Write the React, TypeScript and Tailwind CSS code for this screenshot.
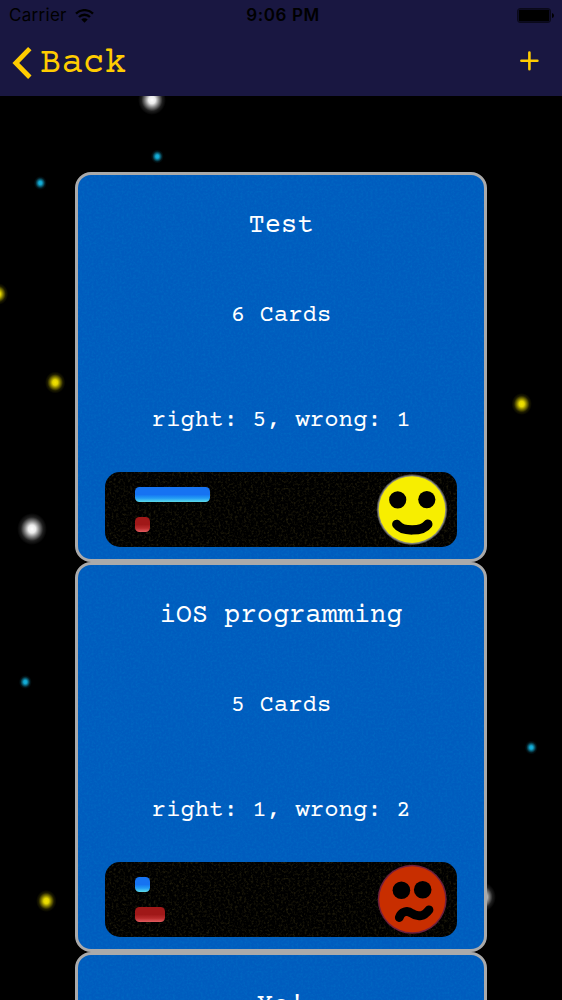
type Deck = { title: string; cards?: number; right?: number; wrong?: number; happy?: boolean };

const decks: Deck[] = [
  { title: "Test", cards: 6, right: 5, wrong: 1, happy: true },
  { title: "iOS programming", cards: 5, right: 1, wrong: 2, happy: false },
  { title: "Yo!" },
];

const stars = [
  { x: 152, y: 100, r: 15, color: "#ffffff" },
  { x: 157.3, y: 156.5, r: 7, color: "#14b4e0" },
  { x: 40.3, y: 183, r: 7, color: "#14b4e0" },
  { x: -2, y: 294, r: 11, color: "#f5e600" },
  { x: 55.2, y: 382.5, r: 11, color: "#f5e600" },
  { x: 521.7, y: 404, r: 11, color: "#f5e600" },
  { x: 32, y: 529, r: 16, color: "#ffffff" },
  { x: 25.3, y: 682, r: 7, color: "#14b4e0" },
  { x: 531.3, y: 747.5, r: 7, color: "#14b4e0" },
  { x: 46.3, y: 901, r: 11, color: "#f5e600" },
  { x: 482, y: 897, r: 15, color: "#ffffff" },
];

function StarField() {
  return (
    <svg className="absolute inset-0" width="562" height="1000" aria-hidden="true">
      <defs>
        {["#ffffff", "#14b4e0", "#f5e600"].map((c) => (
          <radialGradient key={c} id={"glow" + c.slice(1)}>
            <stop offset="0" stopColor={c} />
            <stop offset="0.25" stopColor={c} stopOpacity="0.92" />
            <stop offset="0.5" stopColor={c} stopOpacity="0.5" />
            <stop offset="0.75" stopColor={c} stopOpacity="0.12" />
            <stop offset="1" stopColor={c} stopOpacity="0" />
          </radialGradient>
        ))}
      </defs>
      {stars.map((s, i) => (
        <ellipse key={i} cx={s.x} cy={s.y} rx={s.r * 0.93} ry={s.r} fill={`url(#glow${s.color.slice(1)})`} />
      ))}
    </svg>
  );
}

function Grain({ id, matrix }: { id: string; matrix: string }) {
  return (
    <svg className="absolute inset-0 h-full w-full" aria-hidden="true">
      <filter id={id} x="0" y="0" width="100%" height="100%" colorInterpolationFilters="sRGB">
        <feTurbulence type="fractalNoise" baseFrequency="0.43" numOctaves="3" seed="4" />
        <feColorMatrix values={matrix} />
      </filter>
      <rect width="100%" height="100%" filter={`url(#${id})`} />
    </svg>
  );
}

function Face({ happy }: { happy?: boolean }) {
  return happy ? (
    <svg className="relative" width="72" height="75" viewBox="376 472 72 75" aria-hidden="true">
      <circle cx="412" cy="509.6" r="35.3" fill="#77777c" fillOpacity="0.6" />
      <circle cx="412" cy="509.6" r="34.4" fill="#88887c" />
      <circle cx="412" cy="509.6" r="33.3" fill="#f7ee00" />
      <circle cx="397.7" cy="499.8" r="8.6" />
      <circle cx="426.8" cy="499.6" r="8.6" />
      <path d="M396.8 524.4C402 531.8 422.5 531.8 427.8 524.2" fill="none" stroke="#000" strokeWidth="9.4" strokeLinecap="round" />
    </svg>
  ) : (
    <svg className="relative" width="72" height="75" viewBox="376 862 72 75" aria-hidden="true">
      <circle cx="412.2" cy="899.3" r="34.5" fill="#70203e" />
      <circle cx="412.2" cy="899.3" r="33" fill="#c82e00" />
      <circle cx="401.4" cy="890.2" r="8.8" />
      <circle cx="422.7" cy="889.8" r="8.8" />
      <path d="M399.3 917.5C401 911.5 407.5 910 411.5 913.2C418 917.8 424 916.5 429 909.8" fill="none" stroke="#000" strokeWidth="8.8" strokeLinecap="round" strokeLinejoin="round" />
    </svg>
  );
}

function DeckCard({ deck, index }: { deck: Deck; index: number }) {
  const { title, cards, right = 0, wrong = 0, happy } = deck;
  return (
    <article className="relative flex h-[390px] w-[412px] shrink-0 flex-col items-center overflow-hidden rounded-[16px] border-[3px] border-[#aaaaaa] bg-[#005cbe] text-white">
      <Grain id={"card" + index} matrix="0 0 0 0 0  0 0 0 0 0.46  0 0 0 0 0.78  0.9 0 0 0 -0.36" />
      <h2 className="relative mt-[33px] text-[27px] leading-[36px]">{title}</h2>
      {cards !== undefined && (
        <>
          <p className="relative mt-[56px] text-[24px] leading-[32px]">{cards} Cards</p>
          <p className="relative mt-[73px] text-[24px] leading-[32px]">
            right: {right}, wrong: {wrong}
          </p>
          <div className="relative mt-[35px] flex h-[75px] w-[352px] items-center justify-between overflow-hidden rounded-[15px] bg-black pr-[9px] pl-[30px]">
            <Grain id={"panel" + index} matrix="0 0 0 0 0.18  0 0 0 0 0.16  0 0 0 0 0.06  1.8 0 0 0 -0.85" />
            <div className="relative flex flex-col gap-[15px]">
              <div
                className="h-[15px] rounded-[4.5px] bg-linear-to-b from-[#1673f2] from-50% via-[#259cf4] via-75% to-[#5edbe7]"
                style={{ width: right * 15 }}
              />
              <div
                className="h-[15px] rounded-[4.5px] bg-linear-to-b from-[#a01818] from-50% via-[#b92b2c] via-75% to-[#e35c60]"
                style={{ width: wrong * 15 }}
              />
            </div>
            <Face happy={happy} />
          </div>
        </>
      )}
    </article>
  );
}

function NavBar() {
  return (
    <header className="relative z-10 h-24 bg-[#191741]">
      <div className="flex h-[31px] items-center justify-between pr-[8px] pl-[9px] font-['Inter',sans-serif] text-[17px] text-black">
        <div className="flex w-[200px] items-center gap-[8px]">
          <span className="mt-px tracking-[0.3px]">Carrier</span>
          <svg width="19" height="14" viewBox="0 0 19 14" fill="none" stroke="#000" aria-hidden="true">
            <path d="M1 4.6C5.7 0 13.3 0 18 4.6" strokeWidth="2.4" />
            <path d="M4 8C7 5 12 5 15 8" strokeWidth="2.4" />
            <path d="M6.3 10.5C8 8.8 11 8.8 12.7 10.5L9.5 13.7Z" fill="#000" stroke="none" />
          </svg>
        </div>
        <span className="mt-px pl-[3px] font-semibold tracking-[0.6px]">9:06 PM</span>
        <div className="flex w-[200px] justify-end">
          <svg width="37" height="15" viewBox="0 0 37 15" aria-hidden="true">
            <rect x=".5" y=".5" width="33" height="14" rx="2.5" fill="none" stroke="#000" strokeOpacity="0.6" />
            <rect x="1.6" y="1.6" width="30.8" height="11.8" rx="1" />
            <path d="M35 5Q37 5.5 37 7.5T35 10Z" />
          </svg>
        </div>
      </div>
      <div className="flex h-[65px] items-start justify-between pr-[23px] pl-[12px] text-[#ffcc00]">
        <button className="flex h-[65px] items-start">
          <svg className="mt-[15px]" width="20" height="34" viewBox="0 0 20 34" fill="none" aria-hidden="true">
            <path d="M17.8 2.6L3.8 17L17.8 31.2" stroke="#ffcc00" strokeWidth="4.8" />
          </svg>
          <span className="mt-[12px] ml-[8px] text-[36px] leading-[42px]">Back</span>
        </button>
        <button className="mt-[20px]" aria-label="Add">
          <svg width="19" height="20" viewBox="0 0 19 20" aria-hidden="true">
            <path d="M1.4 9.8H17.4M9.4 1.6V18.2" stroke="#ffcc00" strokeWidth="2.6" strokeLinecap="round" />
          </svg>
        </button>
      </div>
    </header>
  );
}

export default function App() {
  return (
    <div className="relative h-[1000px] w-[562px] overflow-hidden bg-black font-['Courier_Prime','Nimbus_Mono_PS','FreeMono','Liberation_Mono',monospace]">
      <StarField />
      <NavBar />
      <main className="relative flex flex-col items-center pt-[76px]">
        {decks.map((d, i) => (
          <DeckCard key={d.title} deck={d} index={i} />
        ))}
      </main>
    </div>
  );
}
